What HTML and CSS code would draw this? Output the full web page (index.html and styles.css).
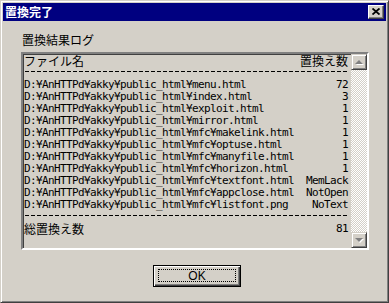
FILE: index.html
```html
<!DOCTYPE html>
<html>
<head>
<meta charset="utf-8">
<title>置換完了</title>
<link rel="stylesheet" href="styles.css">
</head>
<body>
<div class="win">
	<div class="caption">
		<span class="caption_text">置換完了</span>
		<span class="close"><svg width="8" height="7" viewBox="0 0 8 7"><path d="M0.5 0.5 L7.5 6.5 M7.5 0.5 L0.5 6.5" stroke="#000" stroke-width="1.8" fill="none"/></svg></span>
	</div>
	<div class="client">
		<div class="group_label">置換結果ログ</div>
		<div class="listbox">
			<div class="rows">
				<div class="row"><span class="jp">ファイル名</span><span class="jp">置換え数</span></div>
				<div class="row dash"></div>
				<div class="row"><span>D:¥AnHTTPd¥akky¥public_html¥menu.html</span><span>72</span></div>
				<div class="row"><span>D:¥AnHTTPd¥akky¥public_html¥index.html</span><span>3</span></div>
				<div class="row"><span>D:¥AnHTTPd¥akky¥public_html¥exploit.html</span><span>1</span></div>
				<div class="row"><span>D:¥AnHTTPd¥akky¥public_html¥mirror.html</span><span>1</span></div>
				<div class="row"><span>D:¥AnHTTPd¥akky¥public_html¥mfc¥makelink.html</span><span>1</span></div>
				<div class="row"><span>D:¥AnHTTPd¥akky¥public_html¥mfc¥optuse.html</span><span>1</span></div>
				<div class="row"><span>D:¥AnHTTPd¥akky¥public_html¥mfc¥manyfile.html</span><span>1</span></div>
				<div class="row"><span>D:¥AnHTTPd¥akky¥public_html¥mfc¥horizon.html</span><span>1</span></div>
				<div class="row"><span>D:¥AnHTTPd¥akky¥public_html¥mfc¥textfont.html</span><span>MemLack</span></div>
				<div class="row"><span>D:¥AnHTTPd¥akky¥public_html¥mfc¥appclose.html</span><span>NotOpen</span></div>
				<div class="row"><span>D:¥AnHTTPd¥akky¥public_html¥mfc¥listfont.png</span><span>NoText</span></div>
				<div class="row dash"></div>
				<div class="row"><span class="jp">総置換え数</span><span>81</span></div>
			</div>
			<div class="vscroll">
				<div class="sbtn"><span class="arr up"></span></div>
				<div class="track"></div>
				<div class="sbtn"><span class="arr down"></span></div>
			</div>
		</div>
		<div class="btn_row">
			<div class="btn"><span class="focus">OK</span></div>
		</div>
	</div>
</div>
</body>
</html>
```

FILE: styles.css
```css
*{ padding:0; margin:0; box-sizing:border-box; }
body{ background:#d4d0c8; font-family:"Noto Sans CJK JP", sans-serif; font-size:12px; }

.win{ width:389px; height:303px; background:#d4d0c8; border:1px solid; border-color:#d4d0c8 #404040 #404040 #d4d0c8; box-shadow:inset 1px 1px #fff, inset -1px -1px #808080; padding:2px; display:flex; flex-direction:column; }

.caption{ height:18px; background:#000080; display:flex; align-items:center; justify-content:space-between; padding:0 2px 0 2px; }
.caption_text{ color:#fff; font-weight:bold; font-size:12px; line-height:18px; }
.close{ width:16px; height:14px; background:#d4d0c8; border:1px solid; border-color:#fff #404040 #404040 #fff; box-shadow:inset -1px -1px #808080; display:flex; align-items:center; justify-content:center; padding:0 1px 1px 0; }
.close svg{ display:block; }

.client{ flex:1; padding:13px 17px 0 18px; display:flex; flex-direction:column; }
.group_label{ height:18px; line-height:12px; padding-left:1px; }

.listbox{ height:198px; display:flex; background:#d4d0c8; border:2px solid; border-color:#808080 #fff #fff #808080; box-shadow:inset 1px 1px #404040, inset -1px -1px #d4d0c8; }
.rows{ flex:1; padding:1px 3px 0 1px; }
.row{ height:12px; display:flex; justify-content:space-between; font-family:"DejaVu Sans Mono", monospace; font-size:11px; letter-spacing:-0.62px; line-height:12px; white-space:pre; }
.row .jp{ font-family:"Noto Sans CJK JP", sans-serif; font-size:12px; letter-spacing:0; }
.dash{ background:repeating-linear-gradient(90deg, transparent 0 1px, #000 1px 5px, transparent 5px 6px) 0 4px/100% 1px no-repeat; }

.vscroll{ width:16px; display:flex; flex-direction:column; }
.sbtn{ width:16px; height:16px; background:#d4d0c8; border:1px solid; border-color:#d4d0c8 #404040 #404040 #d4d0c8; box-shadow:inset 1px 1px #fff, inset -1px -1px #808080; display:flex; align-items:center; justify-content:center; }
.track{ flex:1; background:repeating-conic-gradient(#fff 0 25%, #d4d0c8 0 50%) 0 0/2px 2px; }
.arr{ width:0; height:0; border-left:4px solid transparent; border-right:4px solid transparent; filter:drop-shadow(1px 1px #fff); }
.arr.up{ border-bottom:4px solid #808080; }
.arr.down{ border-top:4px solid #808080; }

.btn_row{ display:flex; padding:15px 0 0 132px; }
.btn{ width:88px; height:22px; border:1px solid #000; background:#d4d0c8; box-shadow:inset 1px 1px #fff, inset -1px -1px #404040, inset -2px -2px #808080; padding:3px 4px 4px 4px; display:flex; }
.focus{ flex:1; border:1px dotted #000; text-align:center; font-family:"Liberation Sans", sans-serif; font-size:12px; line-height:12px; }
```
